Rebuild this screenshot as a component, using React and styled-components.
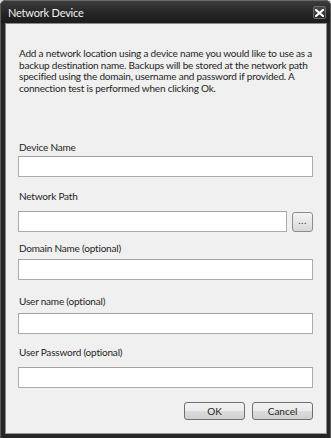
import React from 'react';
import styled, { createGlobalStyle } from 'styled-components';

const GlobalStyle = createGlobalStyle`
  html, body {
    margin: 0;
    padding: 0;
    background: #d9d9d9;
  }
  body {
    font-family: Lato, "Liberation Sans", Arial, sans-serif;
  }
`;

const Window = styled.div`
  width: 331px;
  height: 438px;
  box-sizing: border-box;
  display: flex;
  flex-direction: column;
  background: #262626;
  border-radius: 6px 6px 0 0;
  padding: 0 4px 4px 5px;
  box-shadow: inset 1px 0 0 #5a5a5a, inset -1px 0 0 #5a5a5a, inset 0 1px 0 #6a6a6a;
`;

const TitleBar = styled.div`
  height: 22px;
  flex-shrink: 0;
  display: flex;
  align-items: center;
  justify-content: space-between;
  background: linear-gradient(#3c3c3c, #242424 60%, #1c1c1c);
  margin: 1px -3px 0 -4px;
  padding: 0 4px 0 7px;
  border-radius: 5px 5px 0 0;
`;

const Title = styled.span`
  color: #f0f0f0;
  font-size: 11px;
  letter-spacing: -0.2px;
  margin-top: 1px;
`;

const CloseButton = styled.button`
  width: 13px;
  height: 13px;
  padding: 0;
  margin-top: 1px;
  border: 1px solid #6b6b6b;
  border-radius: 2px;
  background: linear-gradient(#4a4a4a, #2a2a2a);
  display: flex;
  align-items: center;
  justify-content: center;
`;

const Content = styled.div`
  flex: 1;
  min-height: 0;
  min-width: 0;
  background: #f0f0f0;
  border: 1px solid #8a8a8a;
  border-bottom-color: #9a9a9a;
  padding: 24px 13px 0 12px;
  display: flex;
  flex-direction: column;
  color: #1e1e1e;
  font-size: 10px;
  letter-spacing: -0.2px;
`;

const Description = styled.p`
  margin: 0 0 47px 1px;
  line-height: 11.6px;
  white-space: nowrap;
`;

const Field = styled.div`
  display: flex;
  flex-direction: column;
  margin-top: ${({ $top }) => $top}px;
`;

const Label = styled.label`
  line-height: 13px;
  height: 13px;
  margin-left: 1px;
  margin-bottom: ${({ $gap }) => $gap}px;
`;

const Row = styled.div`
  display: flex;
  align-items: center;
  gap: 5px;
`;

const TextBox = styled.input`
  flex: 1;
  min-width: 0;
  height: 21px;
  box-sizing: border-box;
  margin: 0;
  border: 1px solid #ababab;
  border-top-color: #a3a3a3;
  background: #ffffff;
  font: inherit;
  outline: none;
`;

const BrowseButton = styled.button`
  width: 21px;
  height: 20px;
  padding: 0 0 4px;
  box-sizing: border-box;
  border: 1px solid #8c8c8c;
  border-radius: 3px;
  background: linear-gradient(#f4f4f4, #e6e6e6 50%, #d8d8d8);
  font-family: Lato, "Liberation Sans", Arial, sans-serif;
  font-size: 10px;
  color: #3a3a6a;
  letter-spacing: 0.5px;
`;

const Actions = styled.div`
  display: flex;
  justify-content: flex-end;
  gap: 7px;
  margin-top: 14px;
`;

const DialogButton = styled.button`
  width: 61px;
  height: 18px;
  padding: 0;
  box-sizing: border-box;
  border: 1px solid #707070;
  border-radius: 3px;
  background: linear-gradient(#f2f2f2, #ebebeb 50%, #dddddd 51%, #cfcfcf);
  font-family: Lato, "Liberation Sans", Arial, sans-serif;
  font-size: 10px;
  color: #1e1e1e;
`;

const fields = [
  { label: 'Device Name', top: 0, gap: 2 },
  { label: 'Network Path', top: 13, gap: 8, browse: true },
  { label: 'Domain Name (optional)', top: 10, gap: 4 },
  { label: 'User name (optional)', top: 15, gap: 5 },
  { label: 'User Password (optional)', top: 12, gap: 8, password: true },
];

const App = () => {
  return (
    <>
      <GlobalStyle />
      <Window>
        <TitleBar>
          <Title>Network Device</Title>
          <CloseButton aria-label="Close">
            <svg width="9" height="8" viewBox="0 0 9 8">
              <path d="M1 1 L8 7 M8 1 L1 7" stroke="#ffffff" strokeWidth="2.2" strokeLinecap="square" />
            </svg>
          </CloseButton>
        </TitleBar>
        <Content>
          <Description>
            Add a network location using a device name you would like to use as a<br />
            backup destination name. Backups will be stored at the network path<br />
            specified using the domain, username and password if provided. A<br />
            connection test is performed when clicking Ok.
          </Description>
          {fields.map((f) => (
            <Field key={f.label} $top={f.top}>
              <Label $gap={f.gap}>{f.label}</Label>
              <Row>
                <TextBox type={f.password ? 'password' : 'text'} />
                {f.browse && <BrowseButton>...</BrowseButton>}
              </Row>
            </Field>
          ))}
          <Actions>
            <DialogButton>OK</DialogButton>
            <DialogButton>Cancel</DialogButton>
          </Actions>
        </Content>
      </Window>
    </>
  );
};

export default App;
